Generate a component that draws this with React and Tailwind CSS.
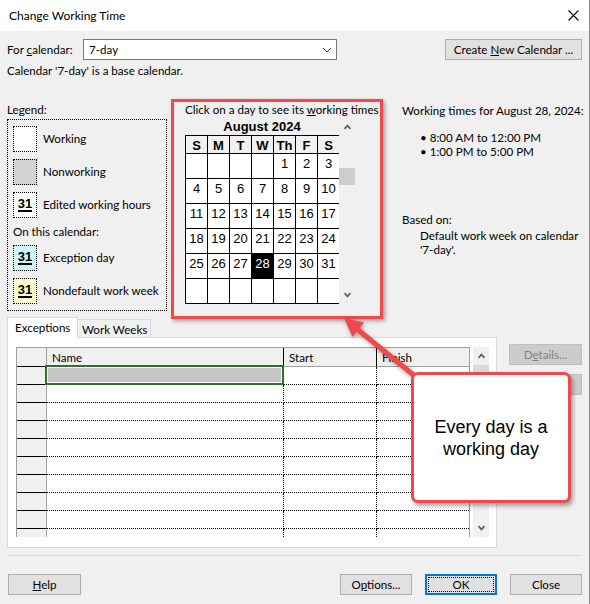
const cal = "font-['Liberation_Sans',Arial,sans-serif]";

const HEAD = ["S", "M", "T", "W", "Th", "F", "S"];
const DAYS = [
  [null, null, null, null, 1, 2, 3],
  [4, 5, 6, 7, 8, 9, 10],
  [11, 12, 13, 14, 15, 16, 17],
  [18, 19, 20, 21, 22, 23, 24],
  [25, 26, 27, 28, 29, 30, 31],
  [null, null, null, null, null, null, null],
];

function Chevron({ up }) {
  return (
    <svg width="9" height="6" viewBox="0 0 9 6">
      <polyline
        points={up ? "1.5,4.8 4.5,1.6 7.5,4.8" : "1.5,1.2 4.5,4.4 7.5,1.2"}
        fill="none"
        stroke="#606060"
        strokeWidth="1.7"
      />
    </svg>
  );
}

function ThirtyOne({ bg }) {
  return (
    <div className={`w-[24px] h-[26px] border border-dotted border-black flex items-center justify-center ${bg}`}>
      <span className={`${cal} font-bold text-[13px] leading-[12px] border-b-2 border-black`}>31</span>
    </div>
  );
}

function Btn({ children, className = "", disabled }) {
  return (
    <div
      className={`h-[21px] flex items-center justify-center border whitespace-nowrap ${
        disabled ? "bg-[#cccccc] border-[#bfbfbf] text-[#838383]" : "bg-[#e1e1e1] border-[#adadad]"
      } ${className}`}
    >
      <span>{children}</span>
    </div>
  );
}

export default function App() {
  return (
    <div className="relative w-[590px] h-[604px] overflow-hidden bg-[#f0f0f0] border-r border-[#8a8a8a] font-['Lato',sans-serif] text-[11.6px] text-black">
      {/* title bar */}
      <div className="h-[31px] bg-white flex items-center justify-between pl-[9px] pr-[10px]">
        <span className="text-[12px]">Change Working Time</span>
        <svg width="11" height="11" viewBox="0 0 11 11">
          <path d="M0.5 0.5L10.5 10.5M10.5 0.5L0.5 10.5" stroke="#000" strokeWidth="1.1" />
        </svg>
      </div>

      {/* calendar selector */}
      <div className="mt-[8px] flex items-center h-[21px] pl-[7px] pr-[7px]">
        <span className="w-[76px]">
          For <span className="underline">c</span>alendar:
        </span>
        <div className="w-[254px] h-[21px] bg-white border border-[#7a7a7a] flex items-center justify-between pl-[5px] pr-[4px]">
          <span>7-day</span>
          <svg width="10" height="6" viewBox="0 0 10 6">
            <polyline points="1,1 5,5 9,1" fill="none" stroke="#333" strokeWidth="1" />
          </svg>
        </div>
        <Btn className="ml-auto w-[137px]">
          Create <span className="underline">N</span>ew Calendar ...
        </Btn>
      </div>
      <div className="mt-[3px] leading-[16px] pl-[7px]">Calendar '7-day' is a base calendar.</div>

      {/* main section */}
      <div className="mt-[23px] flex h-[209px] pl-[7px]">
        {/* legend */}
        <div className="w-[160px]">
          <div className="leading-[16px]">Legend:</div>
          <div className="mt-px h-[192px] border border-dotted border-black pt-[6px] pl-[5px]">
            <div className="flex items-center h-[26px]">
              <div className="w-[24px] h-[26px] bg-white border border-dotted border-black" />
              <span className="ml-[6px]">Working</span>
            </div>
            <div className="mt-[7px] flex items-center h-[26px]">
              <div className="w-[24px] h-[26px] bg-[#d3d3d3] border border-dotted border-black" />
              <span className="ml-[6px]">Nonworking</span>
            </div>
            <div className="mt-[7px] flex items-center h-[26px]">
              <ThirtyOne bg="bg-white" />
              <span className="ml-[6px]">Edited working hours</span>
            </div>
            <div className="mt-[6px] leading-[16px]">On this calendar:</div>
            <div className="mt-[5px] flex items-center h-[26px]">
              <ThirtyOne bg="bg-[#cdf6f6]" />
              <span className="ml-[6px]">Exception day</span>
            </div>
            <div className="mt-[7px] flex items-center h-[26px]">
              <ThirtyOne bg="bg-[#fdfdd0]" />
              <span className="ml-[6px]">Nondefault work week</span>
            </div>
          </div>
        </div>

        {/* month calendar */}
        <div className="ml-[18px] w-[217px]">
          <div className="leading-[16px] whitespace-nowrap">
            Click on a day to see its <span className="underline">w</span>orking times
          </div>
          <div className="flex">
            <div className="w-[154px]">
              <div className={`${cal} h-[17px] text-center font-bold text-[13px] leading-[17px]`}>August 2024</div>
              <div className="w-[154px] overflow-hidden">
                <div className={`${cal} w-[155px] border-l border-t border-black grid grid-cols-[repeat(7,22px)]`}>
                  {HEAD.map((h, i) => (
                    <div
                      key={"h" + i}
                      className="h-[18px] border-r border-b border-black bg-[#f0f0f0] text-center font-bold text-[13px] leading-[17px] pt-px"
                    >
                      {h}
                    </div>
                  ))}
                  {DAYS.flat().map((d, i) => (
                    <div
                      key={i}
                      className={`h-[25px] border-r border-b border-black text-center text-[13px] leading-[16px] pt-[2px] ${
                        d === 28 ? "bg-black text-white" : "bg-white"
                      }`}
                    >
                      {d}
                    </div>
                  ))}
                </div>
              </div>
            </div>
            <div className="w-[16px] h-[186px] flex flex-col">
              <div className="h-[18px] flex items-center justify-center">
                <Chevron up />
              </div>
              <div className="mt-[32px] h-[17px] bg-[#cdcdcd]" />
              <div className="mt-auto h-[18px] flex items-center justify-center">
                <Chevron />
              </div>
            </div>
          </div>
        </div>

        {/* working times */}
        <div className="flex-1 pt-px">
          <div className="leading-[16px] whitespace-nowrap">Working times for August 28, 2024:</div>
          <div className="mt-[12px] pl-[18px] leading-[14px]">
            <div>• 8:00 AM to 12:00 PM</div>
            <div>• 1:00 PM to 5:00 PM</div>
          </div>
          <div className="mt-[54px] leading-[14px]">Based on:</div>
          <div className="mt-[2px] pl-[18px] leading-[14px]">
            Default work week on calendar
            <br />
            '7-day'.
          </div>
        </div>
      </div>

      {/* tabs + exceptions table */}
      <div className="mt-[6px] flex pl-[7px]">
        <div className="w-[490px]">
          <div className="flex items-end h-[20px]">
            <div className="relative z-10 w-[71px] h-[21px] -mb-px bg-white border border-b-0 border-[#d9d9d9] pl-[7px] leading-[19px] whitespace-nowrap">
              Exceptions
            </div>
            <div className="w-[73px] h-[18px] bg-[#f0f0f0] border border-b-0 border-l-0 border-[#d9d9d9] pl-[4px] leading-[19px] whitespace-nowrap">
              Work Weeks
            </div>
          </div>
          <div className="h-[211px] bg-white border border-[#d9d9d9] pt-[9px] pl-[8px] flex">
            <div className="w-[454px] h-[190px] overflow-hidden border-l border-t border-r border-[#a0a0a0] flex flex-col">
              <div className="flex h-[19px] shrink-0 bg-[#f0f0f0]">
                <div className="w-[30px] border-b border-r border-b-black border-r-[#a0a0a0]" />
                <div className="w-[237px] border-b border-r border-b-[#a0a0a0] border-r-black pl-[5px] pt-[2px] leading-[16px]">
                  Name
                </div>
                <div className="w-[93px] border-b border-r border-b-[#a0a0a0] border-r-black pl-[5px] pt-[2px] leading-[16px]">
                  Start
                </div>
                <div className="w-[92px] border-b border-[#a0a0a0] pl-[5px] pt-[2px] leading-[16px]">Finish</div>
              </div>
              {Array.from({ length: 10 }).map((_, i) => (
                <div key={i} className="flex h-[18px] shrink-0">
                  <div className="w-[30px] bg-[#f0f0f0] border-b border-r border-b-black border-r-[#a0a0a0]" />
                  <div className="relative w-[237px] border-b border-r border-dotted border-black">
                    {i === 0 && (
                      <div className="absolute -left-[2px] -top-[2px] -right-[1px] -bottom-[1px] border-2 border-[#2f6f32] bg-white p-px">
                        <div className="h-full bg-[#c6c6c6]" />
                      </div>
                    )}
                  </div>
                  <div className="w-[93px] border-b border-r border-dotted border-black" />
                  <div className="w-[92px] border-b border-dotted border-black" />
                </div>
              ))}
            </div>
            <div className="ml-[3px] w-[16px] h-[190px] bg-[#f0f0f0] flex flex-col">
              <div className="h-[18px] flex items-center justify-center">
                <Chevron up />
              </div>
              <div className="h-[20px] bg-[#dadada]" />
              <div className="mt-auto h-[18px] flex items-center justify-center">
                <Chevron />
              </div>
            </div>
          </div>
        </div>
        <div className="ml-[12px] pt-[27px] flex flex-col gap-[9px]">
          <Btn disabled className="w-[73px]">
            D<span className="underline">e</span>tails...
          </Btn>
          <Btn disabled className="w-[73px]">
            Delete
          </Btn>
        </div>
      </div>

      <div className="mt-[7px] mx-[7px] h-px bg-[#d7d7d7]" />

      {/* bottom buttons */}
      <div className="mt-[18px] flex justify-between pl-[8px] pr-[7px]">
        <Btn className="w-[73px]">
          <span className="underline">H</span>elp
        </Btn>
        <div className="flex gap-[13px]">
          <Btn className="w-[72px]">
            O<span className="underline">p</span>tions...
          </Btn>
          <div className="relative w-[72px] h-[21px] flex items-center justify-center bg-[#e1e1e1] border-2 border-[#0078d7]">
            <div className="absolute inset-px border border-dotted border-black" />
            OK
          </div>
          <Btn className="w-[72px]">Close</Btn>
        </div>
      </div>

      {/* annotation: highlight box */}
      <div className="absolute left-[171px] top-[99px] w-[212px] h-[220px] border-[3px] border-[#f0484b] shadow-[2px_2px_4px_rgba(0,0,0,0.35)] pointer-events-none" />

      {/* annotation: arrow */}
      <svg
        className="absolute left-[330px] top-[300px] pointer-events-none drop-shadow-[1px_2px_2px_rgba(0,0,0,0.35)]"
        width="100"
        height="90"
        viewBox="0 0 100 90"
      >
        <line x1="86" y1="77" x2="27" y2="29" stroke="#f0484b" strokeWidth="5" />
        <polygon points="14,18 34,22.5 22.5,37" fill="#f0484b" />
      </svg>

      {/* annotation: callout */}
      <div className={`${cal} absolute left-[411px] top-[372px] w-[160px] h-[131px] rounded-[7px] border-[3px] border-[#f0484b] bg-white shadow-[2px_3px_4px_rgba(0,0,0,0.35)] flex items-center justify-center text-center text-[18px] leading-[22px]`}>
        <div>
          Every day is a
          <br />
          working day
        </div>
      </div>
    </div>
  );
}
